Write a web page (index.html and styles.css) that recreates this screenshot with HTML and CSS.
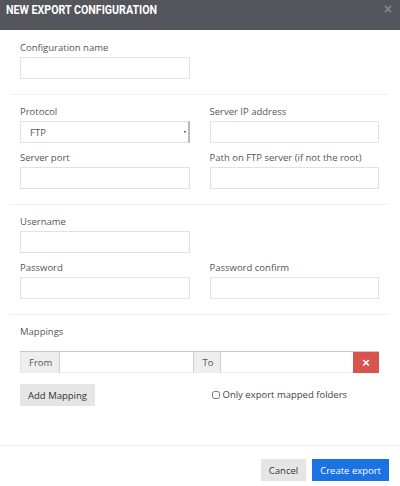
FILE: index.html
```html
<!DOCTYPE html>
<html lang="en">
<head>
    <meta charset="UTF-8">
    <meta name="viewport" content="width=device-width, initial-scale=1.0">
    <title>New Export Configuration</title>
    <link rel="stylesheet" href="styles.css">
</head>
<body>
    <div class="modal">
        <div class="modal-header">
            <h4 class="modal-title">NEW EXPORT CONFIGURATION</h4>
            <button class="close" type="button">&times;</button>
        </div>

        <div class="modal-body">
            <div class="section first">
                <div class="row">
                    <div class="form-group">
                        <label for="config_name">Configuration name</label>
                        <input class="form-control" id="config_name" type="text">
                    </div>
                </div>
            </div>

            <div class="section">
                <div class="row">
                    <div class="form-group">
                        <label for="protocol">Protocol</label>
                        <div class="select-wrap">
                            <select class="form-control" id="protocol">
                                <option>FTP</option>
                                <option>SFTP</option>
                            </select>
                        </div>
                    </div>
                    <div class="form-group">
                        <label for="server_ip">Server IP address</label>
                        <input class="form-control" id="server_ip" type="text">
                    </div>
                    <div class="form-group">
                        <label for="server_port">Server port</label>
                        <input class="form-control" id="server_port" type="text">
                    </div>
                    <div class="form-group">
                        <label for="server_path">Path on FTP server (if not the root)</label>
                        <input class="form-control" id="server_path" type="text">
                    </div>
                </div>
            </div>

            <div class="section">
                <div class="row">
                    <div class="form-group">
                        <label for="username">Username</label>
                        <input class="form-control" id="username" type="text">
                    </div>
                    <div></div>
                    <div class="form-group">
                        <label for="password">Password</label>
                        <input class="form-control" id="password" type="password">
                    </div>
                    <div class="form-group">
                        <label for="password_confirm">Password confirm</label>
                        <input class="form-control" id="password_confirm" type="password">
                    </div>
                </div>
            </div>

            <div class="section last">
                <label class="mappings-label">Mappings</label>
                <div class="input-group">
                    <span class="addon addon-from">From</span>
                    <input class="group-input" type="text">
                    <span class="addon addon-to">To</span>
                    <input class="group-input" type="text">
                    <button class="btn-remove" type="button">&times;</button>
                </div>
                <div class="row mapping-actions">
                    <div>
                        <button class="btn btn-default btn-add" type="button">Add Mapping</button>
                    </div>
                    <label class="checkbox">
                        <input type="checkbox">
                        <span>Only export mapped folders</span>
                    </label>
                </div>
            </div>
        </div>

        <div class="modal-footer">
            <button class="btn btn-default" type="button">Cancel</button>
            <button class="btn btn-primary" type="button">Create export</button>
        </div>
    </div>
</body>
</html>
```

FILE: styles.css
```css
body {
    margin: 0;
    padding: 0;
    font-family: "Open Sans", Arial, sans-serif;
    font-size: 9.5px;
    color: #555;
    background-color: #ffffff;
}

.modal {
    width: 400px;
    min-height: 486px;
    background: #ffffff;
}

.modal-header {
    display: flex;
    justify-content: space-between;
    align-items: flex-start;
    height: 30px;
    box-sizing: border-box;
    padding: 2px 8px 0 6px;
    background-color: #54565b;
}

.modal-title {
    margin: 0;
    font-family: "Roboto", Arial, sans-serif;
    font-weight: bold;
    font-size: 13px;
    line-height: 16px;
    color: #ffffff;
    white-space: nowrap;
    transform: scaleX(0.82);
    transform-origin: left center;
}

.close {
    border: none;
    background: none;
    padding: 0;
    font-family: Arial, sans-serif;
    font-size: 14px;
    font-weight: bold;
    line-height: 14px;
    color: #84868a;
    cursor: pointer;
}

.modal-body {
    padding: 0 11px 0 10px;
}

.section {
    padding: 10px 10px 7px;
    border-bottom: 1px solid #f0f0f0;
}

.section.first {
    padding-top: 11px;
}

.section.last {
    padding-bottom: 39px;
    border-bottom: none;
}

.row {
    display: grid;
    grid-template-columns: 1fr 1fr;
    column-gap: 20px;
}

.form-group {
    margin-bottom: 8px;
}

label {
    display: block;
    line-height: 14px;
    margin-bottom: 2px;
    color: #555;
}

.form-control {
    display: block;
    width: 100%;
    height: 22px;
    box-sizing: border-box;
    padding: 0 9px;
    border: 1px solid #e2e2e2;
    background: #ffffff;
    font-family: "Open Sans", Arial, sans-serif;
    font-size: 9.5px;
    color: #555;
    outline: none;
}

.select-wrap {
    position: relative;
}

select.form-control {
    appearance: none;
    -webkit-appearance: none;
    border-radius: 0;
    border-right: 2px solid #b9b9b9;
}

.select-wrap::after {
    content: "";
    position: absolute;
    right: 4px;
    top: 10px;
    border-left: 1.5px solid transparent;
    border-right: 1.5px solid transparent;
    border-top: 2px solid #222;
}

.mappings-label {
    margin-bottom: 12px;
}

.input-group {
    display: flex;
    height: 22px;
    margin-bottom: 11px;
    border-top: 1px solid #c8c8c8;
    box-sizing: border-box;
}

.addon {
    display: flex;
    align-items: center;
    box-sizing: border-box;
    background-color: #eeeeee;
    border-left: 1px solid #d0d0d0;
    border-right: 1px solid #d0d0d0;
    color: #555;
}

.addon-from {
    width: 40px;
    padding-left: 8px;
    border-left-color: #e2e2e2;
}

.addon-to {
    width: 28px;
    padding-left: 9px;
}

.group-input {
    flex: 1;
    min-width: 0;
    border: none;
    border-bottom: 1px solid #eeeeee;
    padding: 0 6px;
    outline: none;
}

.btn-remove {
    width: 26px;
    border: none;
    background-color: #d9534f;
    color: #ffffff;
    font-family: Arial, sans-serif;
    font-size: 13px;
    font-weight: bold;
    line-height: 1;
    padding: 0;
    cursor: pointer;
}

.mapping-actions {
    align-items: center;
}

.btn {
    height: 22px;
    border: none;
    padding: 0 8px;
    font-family: "Open Sans", Arial, sans-serif;
    font-size: 9.5px;
    cursor: pointer;
}

.btn-add {
    width: 75px;
    padding: 0;
}

.btn-default {
    background-color: #e5e5e5;
    color: #333;
}

.btn-primary {
    background-color: #1b73e2;
    color: #ffffff;
}

.checkbox {
    display: flex;
    align-items: center;
    margin: 0;
    padding-left: 2px;
    color: #444;
}

.checkbox input {
    width: 8px;
    height: 8px;
    margin: 0 3px 0 0;
}

.modal-footer {
    display: flex;
    justify-content: flex-end;
    gap: 6px;
    padding: 13px 11px 0;
    border-top: 1px solid #f0f0f0;
}
```
